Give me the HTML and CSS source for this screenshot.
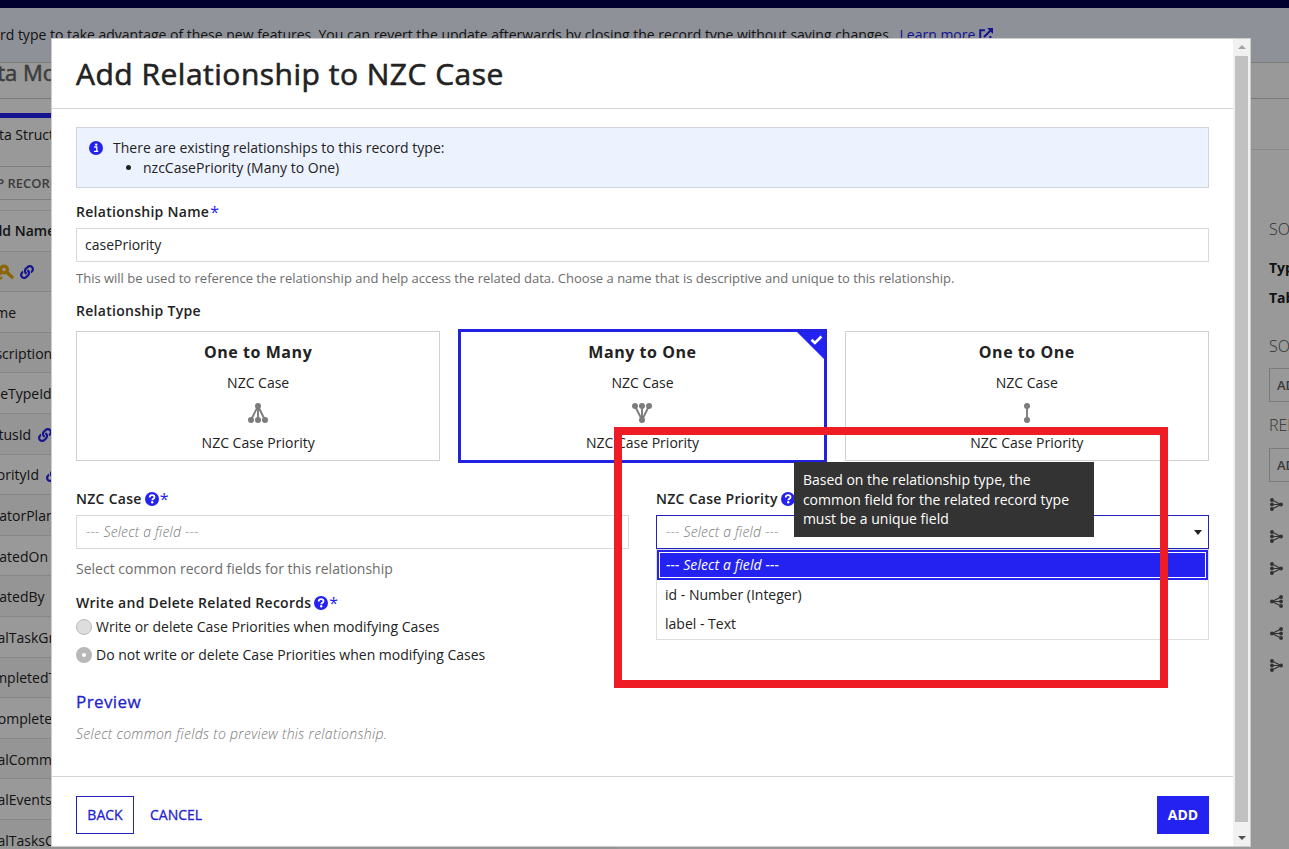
FILE: index.html
```html
<!DOCTYPE html>
<html lang="en">
<head>
    <meta charset="UTF-8">
    <meta name="viewport" content="width=device-width, initial-scale=1.0">
    <title>Add Relationship to NZC Case</title>
    <link rel="stylesheet" href="styles.css">
</head>
<body>

<!-- Shared icons -->
<svg class="sprite" width="0" height="0">
    <symbol id="icon-link" viewBox="0 0 512 512">
        <path d="M326.6 185.4c59.7 59.8 58.9 155.7.4 214.6l-.4.4-67.2 67.2c-59.3 59.3-155.7 59.3-215 0-59.3-59.3-59.3-155.7 0-215l37.1-37.1c9.8-9.8 26.8-3.3 27.3 10.6.6 17.7 3.8 35.5 9.7 52.7 2 5.8.6 12.3-3.8 16.6l-13.1 13.1c-28 28-28.9 73.7-1.2 102 28 28.6 74.1 28.7 102.3.5l67.2-67.2c28.2-28.2 28.1-73.8 0-101.8-3.7-3.7-7.4-6.6-10.3-8.6a16 16 0 0 1-6.9-12.6c-.4-10.6 3.3-21.5 11.7-29.8l21.1-21.1c5.5-5.5 14.2-6.2 20.6-1.7a152 152 0 0 1 20.5 17.2zM467.5 44.4c-59.3-59.3-155.7-59.3-215 0l-67.2 67.2-.4.4c-58.6 58.9-59.4 154.8.4 214.6a152 152 0 0 0 20.5 17.2c6.4 4.5 15.1 3.8 20.6-1.7l21.1-21.1c8.4-8.4 12.1-19.2 11.7-29.8a16 16 0 0 0-6.9-12.6c-2.9-2-6.6-4.9-10.3-8.6-28.1-28.1-28.2-73.6 0-101.8l67.2-67.2c28.2-28.2 74.3-28.1 102.3.5 27.8 28.3 26.9 73.9-1.2 102l-13.1 13.1c-4.4 4.4-5.8 10.8-3.8 16.6 5.9 17.2 9 35 9.7 52.7.5 13.9 17.5 20.4 27.3 10.6l37.1-37.1c59.3-59.3 59.3-155.7 0-215z"/>
    </symbol>
    <symbol id="icon-many" viewBox="0 0 20 20">
        <path d="M10 3v14M10 3L3 17M10 3l7 14" fill="none" stroke="currentColor" stroke-width="1.9"/>
        <circle cx="10" cy="3" r="3"/><circle cx="3" cy="17" r="3"/>
        <circle cx="10" cy="17" r="3"/><circle cx="17" cy="17" r="3"/>
    </symbol>
    <symbol id="icon-one" viewBox="0 0 20 20">
        <path d="M10 3v14" stroke="currentColor" stroke-width="1.9"/>
        <circle cx="10" cy="3" r="3"/><circle cx="10" cy="17" r="3"/>
    </symbol>
    <symbol id="icon-help" viewBox="0 0 14 14">
        <circle cx="7" cy="7" r="7"/>
        <path d="M4.7 5.5C4.8 4 5.8 3.2 7.1 3.2c1.4 0 2.4.8 2.4 2 0 1.6-2.2 1.6-2.2 3" fill="none" stroke="#fff" stroke-width="1.8"/>
        <circle cx="7.2" cy="10.3" r="1.2" fill="#fff"/>
    </symbol>
</svg>

<!-- Record type page behind the dialog -->
<div class="page">
    <div class="topbar"></div>
    <div class="banner">
        <span>rd type to take advantage of these new features. You can revert the update afterwards by closing the record type without saving changes.</span>
        <a class="learn-more">Learn more
            <svg width="14" height="14" viewBox="0 0 14 14"><path d="M6 2.2H1.2v10.6h10.2V8M5 9l7-7" fill="none" stroke="currentColor" stroke-width="2"/><path d="M8 0h6v6z" fill="currentColor"/></svg>
        </a>
    </div>
    <div class="page-title">Data Model</div>
    <div class="columns">
        <div class="fields">
            <div class="tab">Data Structure</div>
            <div class="toolbar">SHOP RECORD</div>
            <div class="table">
                <div class="row head">Field Name</div>
                <div class="row">id
                    <svg class="key" width="18" height="16" viewBox="0 0 18 16"><circle cx="8" cy="5.5" r="3.4" fill="none" stroke="currentColor" stroke-width="3.2"/><path d="M10.5 8l6.5 6" fill="none" stroke="currentColor" stroke-width="3.2"/><path d="M6 8.5L1.5 13l1.2 2 2.4-.6.6-2" fill="none" stroke="currentColor" stroke-width="1.8"/></svg>
                    <svg class="link" width="14" height="14"><use href="#icon-link"/></svg>
                </div>
                <div class="row">name</div>
                <div class="row">description</div>
                <div class="row">caseTypeId</div>
                <div class="row">statusId <svg class="link" width="14" height="14"><use href="#icon-link"/></svg></div>
                <div class="row">priorityId <svg class="link" width="14" height="14"><use href="#icon-link"/></svg></div>
                <div class="row">creatorPlan</div>
                <div class="row">createdOn</div>
                <div class="row">createdBy</div>
                <div class="row">totalTaskGroups</div>
                <div class="row">completedTasks</div>
                <div class="row">incompleteTasks</div>
                <div class="row">totalComments</div>
                <div class="row">totalEvents</div>
                <div class="row">totalTasksCount</div>
            </div>
        </div>
        <div class="side">
            <div class="side-top"></div>
            <div class="side-heading">SOURCE</div>
            <div class="side-label">Type</div>
            <div class="side-label">Table</div>
            <div class="side-heading second">SOURCE FILTERS</div>
            <div class="side-button">ADD FILTERS</div>
            <div class="side-heading third">RELATIONSHIPS</div>
            <div class="side-button">ADD RELATIONSHIP</div>
            <div class="side-icons">
                <svg class="to-one" width="13" height="13"><use href="#icon-many"/></svg>
                <svg class="to-one" width="13" height="13"><use href="#icon-many"/></svg>
                <svg class="to-one" width="13" height="13"><use href="#icon-many"/></svg>
                <svg class="to-many" width="13" height="13"><use href="#icon-many"/></svg>
                <svg class="to-many" width="13" height="13"><use href="#icon-many"/></svg>
                <svg class="to-one" width="13" height="13"><use href="#icon-many"/></svg>
            </div>
        </div>
    </div>
</div>

<div class="overlay"></div>

<div class="modal">
    <div class="modal-content">
        <div class="modal-header">Add Relationship to NZC Case</div>

        <div class="modal-body">
            <div class="info">
                <svg class="info-icon" width="14" height="14" viewBox="0 0 14 14"><circle cx="7" cy="7" r="7"/><path d="M5.2 6h2.6v4.2M5 10.4h4.2" fill="none" stroke="#fff" stroke-width="1.3"/><circle cx="7.2" cy="3.6" r="1.2" fill="#fff"/></svg>
                <div>
                    There are existing relationships to this record type:
                    <ul>
                        <li>nzcCasePriority (Many to One)</li>
                    </ul>
                </div>
            </div>

            <label class="label name-label">Relationship Name<span class="required">*</span></label>
            <div class="input">casePriority</div>
            <div class="help">This will be used to reference the relationship and help access the related data. Choose a name that is descriptive and unique to this relationship.</div>

            <div class="label type-label">Relationship Type</div>
            <div class="cards">
                <div class="card">
                    <strong>One to Many</strong>
                    <span>NZC Case</span>
                    <svg width="20" height="20"><use href="#icon-many"/></svg>
                    <span>NZC Case Priority</span>
                </div>
                <div class="card selected">
                    <strong>Many to One</strong>
                    <span>NZC Case</span>
                    <svg class="flip" width="20" height="20"><use href="#icon-many"/></svg>
                    <span>NZC Case Priority</span>
                    <svg class="corner" width="27" height="27" viewBox="0 0 27 27"><path d="M0 0h27v27z"/><path d="M14.5 7.7l3.4 3.2 6.5-6.4" fill="none" stroke="#fff" stroke-width="2.6"/></svg>
                </div>
                <div class="card">
                    <strong>One to One</strong>
                    <span>NZC Case</span>
                    <svg width="20" height="20"><use href="#icon-one"/></svg>
                    <span>NZC Case Priority</span>
                </div>
            </div>

            <div class="selects">
                <div class="field">
                    <div class="label">NZC Case <svg class="help-icon" width="14" height="14"><use href="#icon-help"/></svg><span class="required">*</span></div>
                    <div class="select">--- Select a field ---</div>
                </div>
                <div class="field">
                    <div class="label">NZC Case Priority <span class="tip"><svg class="help-icon" width="14" height="14"><use href="#icon-help"/></svg><span class="tooltip">Based on the relationship type, the common field for the related record type must be a unique field</span></span></div>
                    <div class="select open">
                        --- Select a field ---
                        <span class="arrow"></span>
                        <div class="menu">
                            <div class="option active">--- Select a field ---</div>
                            <div class="option">id - Number (Integer)</div>
                            <div class="option">label - Text</div>
                        </div>
                    </div>
                </div>
            </div>
            <div class="hint">Select common record fields for this relationship</div>

            <div class="label write-label">Write and Delete Related Records <svg class="help-icon" width="14" height="14"><use href="#icon-help"/></svg><span class="required">*</span></div>
            <div class="radio"><span class="dot"></span>Write or delete Case Priorities when modifying Cases</div>
            <div class="radio"><span class="dot checked"></span>Do not write or delete Case Priorities when modifying Cases</div>

            <div class="preview">Preview</div>
            <div class="preview-text">Select common fields to preview this relationship.</div>
        </div>

        <div class="modal-footer">
            <button class="btn back">BACK</button>
            <button class="btn cancel">CANCEL</button>
            <button class="btn add">ADD</button>
        </div>
    </div>
    <div class="scrollbar">
        <span class="up"></span>
        <div class="thumb"></div>
        <span class="down"></span>
    </div>
</div>

<!-- Red marker round the common field -->
<div class="marker"></div>

</body>
</html>
```
FILE: styles.css
```css
* {
    box-sizing: border-box;
}

body {
    margin: 0;
    height: 849px;
    overflow: hidden;
    position: relative;
    font-family: "Open Sans", "Noto Sans", sans-serif;
    font-size: 14px;
    line-height: 20px;
    color: #222;
    background-color: #fff;
}

svg {
    fill: currentColor;
    flex-shrink: 0;
}

.sprite {
    position: absolute;
}

/* Page behind the dialog */
.page {
    height: 849px;
    overflow: hidden;
    white-space: nowrap;
}

.topbar {
    height: 8px;
    background-color: #00004f;
}

.banner {
    height: 55px;
    padding-top: 17px;
    display: flex;
    align-items: flex-start;
    gap: 7px;
    letter-spacing: -0.01px;
    background-color: #edf2fe;
    border-bottom: 1px solid #ccc;
}

.learn-more,
.link {
    color: #2322f0;
}

.learn-more {
    display: flex;
    align-items: center;
    gap: 4px;
}

.page-title {
    height: 36px;
    margin-left: -31px;
    font-size: 22px;
    line-height: 19px;
    color: #666;
    -webkit-text-stroke: 0.5px #666;
    border-bottom: 1px solid #ccc;
}

.columns {
    display: flex;
    justify-content: space-between;
}

.fields {
    width: 618px;
    padding-top: 14px;
}

.tab {
    height: 54px;
    border-top: 5px solid #2322f0;
    border-bottom: 1px solid #d0d0d0;
    padding-top: 7px;
    text-indent: -19px;
}

.toolbar {
    height: 33px;
    padding-top: 6px;
    font-size: 13px;
    font-weight: 600;
    color: #666;
    text-indent: -31px;
    border-bottom: 1px solid #d0d0d0;
}

.table {
    margin-top: 10px;
    border-top: 1px solid #e4e4e4;
}

.row {
    height: 40.6px;
    margin-left: -21px;
    padding-top: 2px;
    display: flex;
    align-items: center;
    gap: 7px;
    border-bottom: 1px solid #e0e0e0;
}

.row.head {
    padding-top: 0;
    font-weight: 600;
}

.row:nth-child(even) {
    background-color: #f8f8f8;
}

.key {
    color: #eaa800;
    margin: 0 -1px 0 -2px;
}

.side {
    width: 38px;
    padding-left: 18px;
    overflow: hidden;
}

.side-top {
    height: 51px;
    margin-left: -18px;
    border-bottom: 1px solid #e4e4e4;
}

.side-heading {
    margin: 69px 0 19px;
    font-size: 16px;
    font-weight: 300;
    color: #555;
}

.side-heading.second {
    margin: 28px 0 12px;
}

.side-heading.third {
    margin: 13px 0;
}

.side-label {
    font-weight: 700;
    margin-bottom: 10px;
}

.side-button {
    width: 150px;
    height: 34px;
    padding: 6px 7px;
    font-size: 13px;
    font-weight: 600;
    color: #666;
    border: 1px solid #ccc;
}

.side-icons {
    padding: 16px 0 0 1px;
    display: flex;
    flex-direction: column;
    gap: 19.2px;
    color: #555;
}

.to-one {
    transform: rotate(90deg);
}

.to-many {
    transform: rotate(-90deg);
}

.overlay {
    position: absolute;
    inset: 0;
    background-color: rgba(0, 0, 0, 0.4);
}

/* Dialog */
.modal {
    position: absolute;
    left: 51px;
    top: 38px;
    width: 1200px;
    height: 809px;
    display: flex;
    background-color: #fff;
    border: 1px solid #ccc;
}

.modal-content {
    flex: 1;
}

.modal-header {
    height: 70px;
    padding: 15px 24px;
    font-size: 30px;
    line-height: 40px;
    letter-spacing: 0.5px;
    -webkit-text-stroke: 0.6px #222;
    border-bottom: 1px solid #d4d4d4;
}

.modal-body {
    height: 667px;
    padding: 18px 24px 0;
}

.info {
    height: 61px;
    padding: 10px 12px;
    display: flex;
    gap: 10px;
    background-color: #edf2ff;
    border: 1px solid #d0d4dc;
}

.info-icon {
    margin-top: 3px;
    color: #2322f0;
}

.info ul {
    margin: 0;
    padding-left: 30px;
}

.label {
    font-weight: 600;
    letter-spacing: 0.28px;
    display: flex;
    align-items: center;
    gap: 3px;
}

.required {
    color: #2322f0;
    font-size: 16px;
    font-weight: 400;
    margin-left: -2px;
}

.help-icon {
    display: block;
    color: #2322f0;
}

.name-label {
    margin: 14px 0 6px;
}

.input,
.select {
    height: 34px;
    padding: 6px 8px;
    border: 1px solid #d9d9d9;
}

.help {
    margin-top: 6px;
    font-size: 13px;
    color: #6c6c6c;
}

.type-label {
    margin: 13px 0 10px;
}

.cards {
    height: 130px;
    display: flex;
    gap: 20px;
}

.card {
    flex: 1;
    padding-top: 10px;
    display: flex;
    flex-direction: column;
    align-items: center;
    gap: 10px;
    border: 1px solid #d0d0d0;
}

.card strong {
    font-size: 16px;
    font-weight: 700;
    letter-spacing: 0.55px;
    margin-bottom: 1px;
}

.card svg {
    color: #7c7c7c;
}

.card.selected {
    position: relative;
    margin: -2px;
    border: 3px solid #2322e0;
}

.card .flip {
    transform: rotate(180deg);
}

.card .corner {
    position: absolute;
    top: 0;
    right: 0;
    color: #2322f0;
}

.selects {
    margin-top: 28px;
    display: flex;
    gap: 27px;
}

.field {
    flex: 1;
}

.select {
    position: relative;
    margin-top: 6px;
    padding-left: 9px;
    font-style: italic;
    font-weight: 300;
    letter-spacing: 0.18px;
    color: #777;
}

.select.open {
    border-color: #2322bb;
}

.arrow {
    position: absolute;
    right: 6px;
    top: 14px;
    border: 4.5px solid transparent;
    border-top: 5px solid #222;
    border-bottom: 0;
}

.menu {
    position: absolute;
    left: -1px;
    right: -1px;
    top: 33px;
    height: 91px;
    background-color: #fff;
    border: 1px solid #ddd;
}

.option {
    height: 29px;
    padding: 5px 8px;
    font-style: normal;
    font-weight: 400;
    letter-spacing: 0;
    color: #222;
}

.option.active {
    height: 30px;
    padding: 3px 7px;
    font-style: italic;
    letter-spacing: 0.1px;
    color: #fff;
    background-color: #2322f0;
    border: 2px solid #2322f0;
    box-shadow: inset 0 0 0 1px #fff;
}

.tip {
    position: relative;
}

.tooltip {
    position: absolute;
    z-index: 2;
    left: 13px;
    top: -30px;
    width: 300px;
    height: 75px;
    padding: 8px 9px;
    font-weight: 400;
    letter-spacing: 0;
    line-height: 19.6px;
    color: #fff;
    background-color: #333;
}

.hint {
    margin: 10px 0 14px;
    color: #6c6c6c;
}

.write-label {
    margin-bottom: 4px;
}

.radio {
    display: flex;
    align-items: center;
    gap: 4px;
    margin-bottom: 8px;
}

.dot {
    width: 16px;
    height: 16px;
    border-radius: 50%;
    background-color: #ddd;
    border: 1px solid #bbb;
}

.dot.checked {
    border: 6px solid #b8b8b8;
    background-color: #fff;
}

.preview {
    margin: 25px 0 10px;
    font-size: 17px;
    line-height: 24px;
    letter-spacing: 0.4px;
    color: #2322d0;
    -webkit-text-stroke: 0.3px #2322d0;
}

.preview-text {
    font-style: italic;
    font-weight: 300;
    letter-spacing: 0.3px;
    color: #777;
}

.modal-footer {
    padding: 19px 24px 0;
    display: flex;
    border-top: 1px solid #d4d4d4;
}

.btn {
    height: 38px;
    padding: 0 0 2px;
    font-family: inherit;
    font-size: 14px;
    color: #2322d0;
    -webkit-text-stroke: 0.3px #2322d0;
    background-color: #fff;
    border: 0;
}

.btn.back {
    width: 58px;
    border: 1px solid #2322bb;
}

.btn.cancel {
    margin-left: 16px;
}

.btn.add {
    width: 52px;
    margin-left: auto;
    font-weight: 700;
    color: #fff;
    -webkit-text-stroke: 0;
    background-color: #2322f0;
}

.scrollbar {
    width: 17px;
    padding: 6px 0;
    display: flex;
    flex-direction: column;
    align-items: center;
    background-color: #f1f1f1;
}

.thumb {
    width: 13px;
    height: 766px;
    margin: 7px 0 auto;
    background-color: #c1c1c1;
}

.up,
.down {
    border: 4px solid transparent;
}

.up {
    border-top: 0;
    border-bottom-color: #a3a3a3;
}

.down {
    border-bottom: 0;
    border-top-color: #505050;
}

.marker {
    position: absolute;
    left: 614px;
    top: 427px;
    width: 554px;
    height: 261px;
    border: 8px solid #ee1c25;
}
```
